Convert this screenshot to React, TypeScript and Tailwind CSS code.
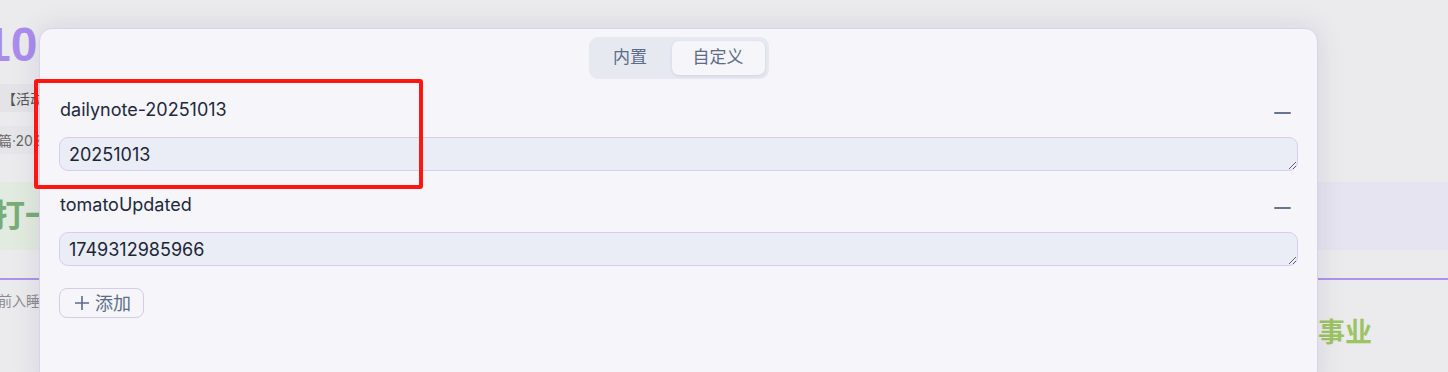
import React from 'react';

const FONT = { fontFamily: 'Inter, "Noto Sans CJK SC", "Noto Sans", sans-serif' };

interface Field {
  key: string;
  value: string;
}

const fields: Field[] = [
  { key: 'dailynote-20251013', value: '20251013' },
  { key: 'tomatoUpdated', value: '1749312985966' },
];

const Backdrop: React.FC = () => (
  <div className="flex flex-col h-full">
    <div className="pt-[18px] h-[74px]">
      <span className="block -ml-[16px] text-[48px] leading-[54px] font-bold text-[#a98cec] font-['Liberation_Sans',sans-serif]">10</span>
    </div>
    <div className="mt-[10px] h-[28px] w-[60px] bg-[#e3e3e8] flex items-center text-[14px] text-[#555] pl-[2px]">【活动</div>
    <div className="mt-[14px] h-[28px] w-[60px] bg-[#e6e6ea] flex items-center text-[14px] text-[#666] -ml-[2px]">篇·2025</div>
    <div className="mt-[28px] h-[68px] bg-[linear-gradient(90deg,#e2ebdf_0%,#e6e5ef_40%,#e6e4f0_100%)] flex items-center">
      <span className="-ml-[7px] text-[32px] font-bold text-[#78ad78]">打一</span>
    </div>
    <div className="mt-[28px] h-[2px] bg-[#ad93eb]" />
    <div className="flex justify-between">
      <span className="-ml-[2px] mt-[10px] text-[14px] text-[#8a8a90]">前入睡</span>
      <div className="w-[130px] pt-[33px]">
        <span className="text-[27px] font-bold text-[#9cc464]">事业</span>
      </div>
    </div>
  </div>
);

const MinusBar: React.FC = () => (
  <button className="w-[24px] h-[24px] flex items-center justify-start pt-[5px]">
    <span className="block w-[17px] h-[2px] bg-[#66768f] rounded-full" />
  </button>
);

const App: React.FC = () => {
  return (
    <div className="relative w-[1448px] h-[372px] bg-[#ebebed] overflow-hidden" style={FONT}>
      <Backdrop />

      {/* modal */}
      <div className="absolute left-[39px] top-[28px] w-[1279px] h-[360px] bg-[#f5f5fa] border border-[#d8d2ee] rounded-t-[13px] shadow-[0_0_28px_rgba(60,50,100,0.12)]">
        <div className="flex justify-center pt-[8px]">
          <div className="flex gap-[4px] p-[4px] rounded-[9px] bg-[#e7e9f1]">
            <button className="w-[75px] h-[34px] rounded-[7px] text-[17px] text-[#5c6c88]">内置</button>
            <button className="w-[93px] h-[34px] rounded-[7px] text-[17px] text-[#5c6c88] bg-[#f5f5fa] shadow-[0_1px_3px_rgba(40,40,80,0.12)]">自定义</button>
          </div>
        </div>

        <div className="px-[19px] pt-[19px] flex flex-col gap-[22px]">
          {fields.map((f) => (
            <div key={f.key} className="flex flex-col gap-[15px]">
              <div className="h-[24px] flex items-center justify-between pl-[1px]">
                <span className="text-[18px] leading-[24px] text-[#1f293d]">{f.key}</span>
                <MinusBar />
              </div>
              <textarea
                readOnly
                rows={1}
                defaultValue={f.value}
                className="block w-full h-[34px] px-[9px] pt-[5px] pb-[3px] text-[18px] leading-[24px] text-[#1c2538] bg-[#eaedf5] border border-[#d6cef2] rounded-[9px] outline-none overflow-hidden"
              />
            </div>
          ))}
        </div>

        <div className="px-[19px] mt-[22px]">
          <button className="flex items-center gap-[5px] h-[30px] w-[85px] pl-[14px] border border-[#d3cde8] rounded-[8px] text-[18px] text-[#5c6c88]">
            <svg width="16" height="16" viewBox="0 0 16 16" fill="none" stroke="#5c6c88" strokeWidth="1.6">
              <path d="M8 1v14M1 8h14" />
            </svg>
            <span>添加</span>
          </button>
        </div>
      </div>

      {/* annotation */}
      <div className="absolute left-[34px] top-[79px] w-[389px] h-[110px] border-[4px] border-[#ff160f] rounded-[3px]" />
    </div>
  );
};

export default App;
